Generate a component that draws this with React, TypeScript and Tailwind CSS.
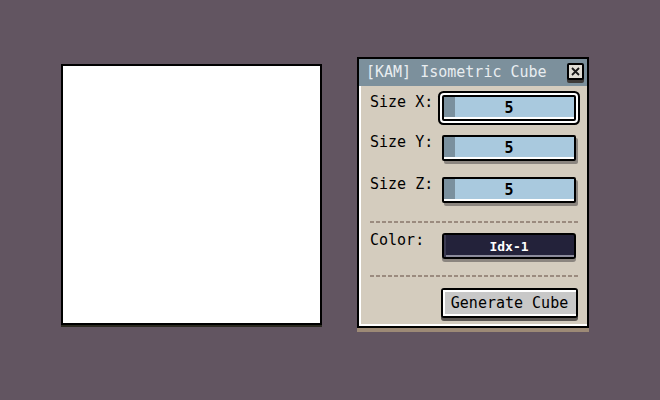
import React from 'react';

const font = { fontFamily: '"DejaVu Sans Mono", "Liberation Mono", monospace' };

type FieldProps = { value: string; focused?: boolean };

const SizeField: React.FC<FieldProps> = ({ value, focused }) => (
    <div
        className={`relative h-[26px] w-[134px] border-2 border-black bg-[#a9c9de] rounded-[2px] ${
            focused
                ? 'shadow-[0_0_0_2px_#ffffff,0_0_0_4px_#000000]'
                : 'shadow-[2px_3px_0_#8b857f]'
        }`}
    >
        {/* slider fill */}
        <div className="absolute left-0 top-0 bottom-[2px] w-[11px] bg-[#7a909e]" />
        <div className="absolute left-0 right-0 bottom-0 h-[2px] bg-white" />
        <div className="relative flex h-full items-center justify-center text-[15px] font-bold leading-none text-black">
            {value}
        </div>
    </div>
);

const Row: React.FC<{ label: string; className?: string; children: React.ReactNode }> = ({ label, className, children }) => (
    <div className={`flex items-start ${className || ''}`}>
        <div className="w-[72px] pt-[1px] text-[15px] leading-[13px] text-black">{label}</div>
        {children}
    </div>
);

const Dashed: React.FC<{ className?: string }> = ({ className }) => (
    <div
        className={`h-[2px] w-[208px] bg-[repeating-linear-gradient(90deg,#9b8b7f_0px,#9b8b7f_4px,transparent_4px,transparent_6px)] ${className || ''}`}
    />
);

export default function App() {
    return (
        <div className="flex h-[400px] w-[660px] items-start bg-[#625561]" style={font}>
            {/* canvas */}
            <div className="ml-[61px] mt-[64px] h-[261px] w-[261px] border-2 border-black bg-white shadow-[0_2px_0_#2b2a20]" />

            {/* dialog */}
            <div className="ml-[35px] mt-[57px] w-[232px] border-2 border-black bg-[#d4ccbe] shadow-[0_4px_0_#9d8a76]">
                {/* title bar */}
                <div className="flex h-[27px] items-center justify-between bg-[#7c909c] pl-[7px] pr-[3px]">
                    <span className="text-[15px] leading-none text-[#e8edf0]">[KAM] Isometric Cube</span>
                    <div className="mb-[3px] flex h-[17px] w-[17px] items-center justify-center rounded-[2px] border-2 border-black bg-[#e0ddd5] shadow-[0_3px_0_#3d3a38]">
                        <svg width="9" height="9" viewBox="0 0 9 9">
                            <path d="M1 1 L8 8 M8 1 L1 8" stroke="#1a1a1a" strokeWidth="1.8" />
                        </svg>
                    </div>
                </div>

                {/* body */}
                <div className="border-b-2 border-l-2 border-white pb-[6px] pl-[9px] pr-[9px] pt-[9px]">
                    <Row label="Size X:">
                        <SizeField value="5" focused />
                    </Row>
                    <Row label="Size Y:" className="mt-[14px]">
                        <SizeField value="5" />
                    </Row>
                    <Row label="Size Z:" className="mt-[16px]">
                        <SizeField value="5" />
                    </Row>

                    <Dashed className="mt-[18px]" />

                    <Row label="Color:" className="mt-[10px]">
                        <div className="relative h-[26px] w-[134px] rounded-[3px] border-2 border-black bg-[#23223a] shadow-[0_3px_0_#8b857f]">
                            <div className="absolute left-0 right-0 bottom-0 h-[2px] bg-[#8c8c9c]" />
                            <div className="absolute left-0 top-0 bottom-0 w-[2px] bg-[#3c3b52]" />
                            <div className="relative flex h-full items-center justify-center text-[13px] font-bold leading-none text-white">
                                Idx-1
                            </div>
                        </div>
                    </Row>

                    <Dashed className="mt-[16px]" />

                    <div className="mt-[11px] flex justify-end">
                        <div className="relative h-[30px] w-[137px] rounded-[3px] border-2 border-black bg-[#c8c8c8] shadow-[0_3px_0_#5b5652]">
                            <div className="absolute left-0 right-0 top-0 h-[2px] bg-white" />
                            <div className="absolute left-0 top-0 bottom-0 w-[2px] bg-white" />
                            <div className="absolute left-0 right-0 bottom-0 h-[2px] bg-white" />
                            <div className="relative flex h-full items-center justify-center text-[15px] leading-none text-black">
                                Generate Cube
                            </div>
                        </div>
                    </div>
                </div>
            </div>
        </div>
    );
}
